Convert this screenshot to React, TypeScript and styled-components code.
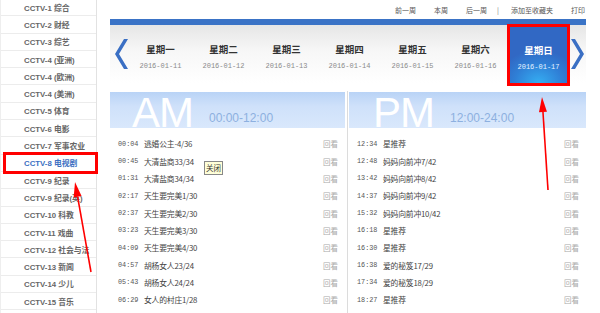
import React from 'react';
import styled, { createGlobalStyle } from 'styled-components';

const GlobalStyle = createGlobalStyle`
  html, body {
    margin: 0;
    padding: 0;
    background: #fff;
  }
  body {
    font-family: "Liberation Sans", "Noto Sans CJK SC", sans-serif;
    color: #555;
  }
`;

const channels = [
  'CCTV-1 综合', 'CCTV-2 财经', 'CCTV-3 综艺', 'CCTV-4 (亚洲)', 'CCTV-4 (欧洲)',
  'CCTV-4 (美洲)', 'CCTV-5 体育', 'CCTV-6 电影', 'CCTV-7 军事农业', 'CCTV-8 电视剧',
  'CCTV-9 纪录', 'CCTV-9 纪录(英)', 'CCTV-10 科教', 'CCTV-11 戏曲', 'CCTV-12 社会与法',
  'CCTV-13 新闻', 'CCTV-14 少儿', 'CCTV-15 音乐',
];

const days = [
  { name: '星期一', date: '2016-01-11' },
  { name: '星期二', date: '2016-01-12' },
  { name: '星期三', date: '2016-01-13' },
  { name: '星期四', date: '2016-01-14' },
  { name: '星期五', date: '2016-01-15' },
  { name: '星期六', date: '2016-01-16' },
  { name: '星期日', date: '2016-01-17' },
];

const amList = [
  ['00:04', '逃婚公主-4/36'], ['00:45', '大清盐商33/34'], ['01:31', '大清盐商34/34'],
  ['02:17', '天生要完美1/30'], ['02:37', '天生要完美2/30'], ['03:23', '天生要完美3/30'],
  ['04:09', '天生要完美4/30'], ['04:57', '胡杨女人23/24'], ['05:43', '胡杨女人24/24'],
  ['06:29', '女人的村庄1/28'],
];

const pmList = [
  ['12:34', '星推荐'], ['12:48', '妈妈向前冲7/42'], ['13:42', '妈妈向前冲8/42'],
  ['14:37', '妈妈向前冲9/42'], ['15:32', '妈妈向前冲10/42'], ['16:18', '星推荐'],
  ['16:30', '星推荐'], ['16:38', '爱的秘笈17/29'], ['17:34', '爱的秘笈18/29'],
  ['18:27', '星推荐'],
];

const Page = styled.div`
  position: relative;
  width: 600px;
  height: 313px;
  overflow: hidden;
  display: flex;
`;

const Sidebar = styled.ul`
  width: 97px;
  margin: -1px 0 0;
  padding: 0;
  list-style: none;
  border-right: 1px solid #e2e2e2;
  border-left: 1px solid #eee;
  box-sizing: border-box;
`;

const ChannelItem = styled.li<{ $active?: boolean }>`
  position: relative;
  height: 17.3px;
  box-sizing: border-box;
  padding-left: 23px;
  display: flex;
  align-items: center;
  white-space: nowrap;
  font-size: 7.8px;
  font-weight: bold;
  color: ${({ $active }) => ($active ? '#3b6fc2' : '#666')};
  border-bottom: 1px solid #ececec;

  &::after {
    content: '';
    display: ${({ $active }) => ($active ? 'block' : 'none')};
    position: absolute;
    left: 2px;
    right: -2px;
    top: -3px;
    bottom: -3px;
    border: 3px solid #f00;
  }
`;

const Main = styled.div`
  width: 476px;
  margin-left: 13px;
  display: flex;
  flex-direction: column;
`;

const TopLinks = styled.div`
  height: 19px;
  display: flex;
  justify-content: flex-end;
  align-items: center;
  gap: 18px;
  padding-right: 1px;
  font-size: 7px;
  color: #555;
  font-family: "Noto Sans CJK SC", sans-serif;
`;

const Sep = styled.span`
  margin: 0 -6px 0 -8px;
  color: #777;
`;

const BlueBar = styled.div`
  height: 6px;
  background: #3a73c6;
`;

const DayHeader = styled.div`
  height: 58px;
  display: flex;
  background: linear-gradient(#e6e6e6, #f7f7f7 45%, #fff);
`;

const Chevron = styled.div<{ $w: number; $pad: number }>`
  width: ${({ $w }) => $w}px;
  box-sizing: border-box;
  padding-left: ${({ $pad }) => $pad}px;
  display: flex;
  align-items: center;
`;

const DayCell = styled.div<{ $active?: boolean }>`
  width: 63px;
  flex: none;
  box-sizing: border-box;
  display: flex;
  flex-direction: column;
  align-items: center;
  justify-content: center;
  gap: 6px;
  margin-top: ${({ $active }) => ($active ? '-1px' : '0')};
  height: ${({ $active }) => ($active ? '62px' : '58px')};
  padding-top: 4px;
  border: ${({ $active }) => ($active ? '3px solid #f00' : 'none')};
  background: ${({ $active }) =>
    $active ? 'radial-gradient(ellipse 70% 60% at 50% 100%, #35aef2, #2f7fd6 60%, #3168c4)' : 'transparent'};
  position: relative;
  z-index: 1;
`;

const DayName = styled.div<{ $active?: boolean }>`
  font-family: "Noto Sans CJK SC", sans-serif;
  font-size: 9.5px;
  font-weight: bold;
  color: ${({ $active }) => ($active ? '#fff' : '#333')};
`;

const DayDate = styled.div<{ $active?: boolean }>`
  font-family: "Liberation Mono", monospace;
  font-size: 7px;
  color: ${({ $active }) => ($active ? '#e8f2ff' : '#8a8a8a')};
`;

const Schedule = styled.div`
  display: flex;
  margin-top: 8px;
  flex: 1;
`;

const Half = styled.div<{ $w: number }>`
  width: ${({ $w }) => $w}px;
  display: flex;
  flex-direction: column;
  padding-top: 1px;
`;

const Divider = styled.div`
  width: 1px;
  margin: 0 1px 0 2px;
  background: #dcdcdc;
`;

const Band = styled.div<{ $pad: number }>`
  position: relative;
  height: 36px;
  display: flex;
  align-items: flex-end;
  padding-left: ${({ $pad }) => $pad}px;
  background: linear-gradient(#b9d3f6, #cfe1fa 40%, #d9e8fc);
`;

const BigLabel = styled.span`
  font-family: "Liberation Sans", sans-serif;
  font-size: 42px;
  line-height: 36px;
  letter-spacing: -1px;
  color: #fff;
  margin-bottom: -3px;
`;

const Range = styled.span`
  font-family: "Liberation Sans", sans-serif;
  font-size: 12px;
  color: #8db0e0;
  margin-left: 16px;
  margin-bottom: 3px;
`;

const Rows = styled.ul`
  margin: 0;
  padding: 7px 0 0;
  list-style: none;
`;

const Row = styled.li<{ $pad: number }>`
  height: 17.35px;
  display: flex;
  align-items: center;
  padding-left: ${({ $pad }) => $pad}px;
  padding-right: 7px;
  font-size: 8px;
  color: #444;
`;

const Time = styled.span`
  font-family: "Liberation Mono", monospace;
  font-size: 6.8px;
  width: 26px;
  color: #555;
`;

const Title = styled.span`
  font-family: "Noto Sans CJK SC", sans-serif;
  font-size: 7.8px;
  flex: 1;
  letter-spacing: -0.2px;
  color: #444;
`;

const Replay = styled.span`
  font-family: "Noto Sans CJK SC", sans-serif;
  font-size: 7.5px;
  color: #aaa;
`;

const Tip = styled.span`
  position: absolute;
  left: 204px;
  top: 161px;
  padding: 1px 1px;
  font-family: "Noto Sans CJK SC", sans-serif;
  font-size: 7.5px;
  line-height: 10px;
  color: #333;
  background: #ffffd8;
  border: 1px solid #888;
`;

const Overlay = styled.svg`
  position: absolute;
  left: 0;
  top: 0;
  pointer-events: none;
  z-index: 5;
`;

function ChevronIcon({ dir }: { dir: 'left' | 'right' }) {
  const pts = dir === 'left' ? '9,0 13,0 4,15 13,30 9,30 0,15' : '0,0 4,0 13,15 4,30 0,30 9,15';
  return (
    <svg width="13" height="30" viewBox="0 0 13 30">
      <polygon points={pts} fill="#3a6fc4" />
    </svg>
  );
}

function Arrow({ x1, y1, x2, y2 }: { x1: number; y1: number; x2: number; y2: number }) {
  const ang = Math.atan2(y2 - y1, x2 - x1);
  const len = 15;
  const half = 4;
  const bx = x2 - len * Math.cos(ang);
  const by = y2 - len * Math.sin(ang);
  const px = -Math.sin(ang) * half;
  const py = Math.cos(ang) * half;
  return (
    <g>
      <line x1={x1} y1={y1} x2={bx} y2={by} stroke="#f00" strokeWidth={1.6} />
      <polygon points={`${x2},${y2} ${bx + px},${by + py} ${bx - px},${by - py}`} fill="#f00" />
    </g>
  );
}

export default function App() {
  return (
    <Page>
      <GlobalStyle />
      <Sidebar>
        {channels.map((c, i) => (
          <ChannelItem key={c} $active={i === 9}>{c}</ChannelItem>
        ))}
      </Sidebar>
      <Main>
        <TopLinks>
          <span>前一周</span>
          <span>本周</span>
          <span>后一周</span>
          <Sep>|</Sep>
          <span>添加至收藏夹</span>
          <span>打印</span>
        </TopLinks>
        <BlueBar />
        <DayHeader>
          <Chevron $w={19} $pad={5}><ChevronIcon dir="left" /></Chevron>
          {days.map((d, i) => (
            <DayCell key={d.date} $active={i === 6}>
              <DayName $active={i === 6}>{d.name}</DayName>
              <DayDate $active={i === 6}>{d.date}</DayDate>
            </DayCell>
          ))}
          <Chevron $w={16} $pad={1}><ChevronIcon dir="right" /></Chevron>
        </DayHeader>
        <Schedule>
          <Half $w={235}>
            <Band $pad={22}>
              <BigLabel>AM</BigLabel>
              <Range>00:00-12:00</Range>
            </Band>
            <Rows>
              {amList.map(([t, n]) => (
                <Row key={t} $pad={8}>
                  <Time>{t}</Time>
                  <Title>{n}</Title>
                  <Replay>回看</Replay>
                </Row>
              ))}
            </Rows>
          </Half>
          <Divider />
          <Half $w={237}>
            <Band $pad={24}>
              <BigLabel>PM</BigLabel>
              <Range>12:00-24:00</Range>
            </Band>
            <Rows>
              {pmList.map(([t, n]) => (
                <Row key={t} $pad={8}>
                  <Time>{t}</Time>
                  <Title>{n}</Title>
                  <Replay>回看</Replay>
                </Row>
              ))}
            </Rows>
          </Half>
        </Schedule>
      </Main>
      <Tip>关闭</Tip>
      <Overlay width={600} height={313}>
        <Arrow x1={91} y1={272} x2={75} y2={182} />
        <Arrow x1={548} y1={190} x2={542} y2={97} />
      </Overlay>
    </Page>
  );
}
